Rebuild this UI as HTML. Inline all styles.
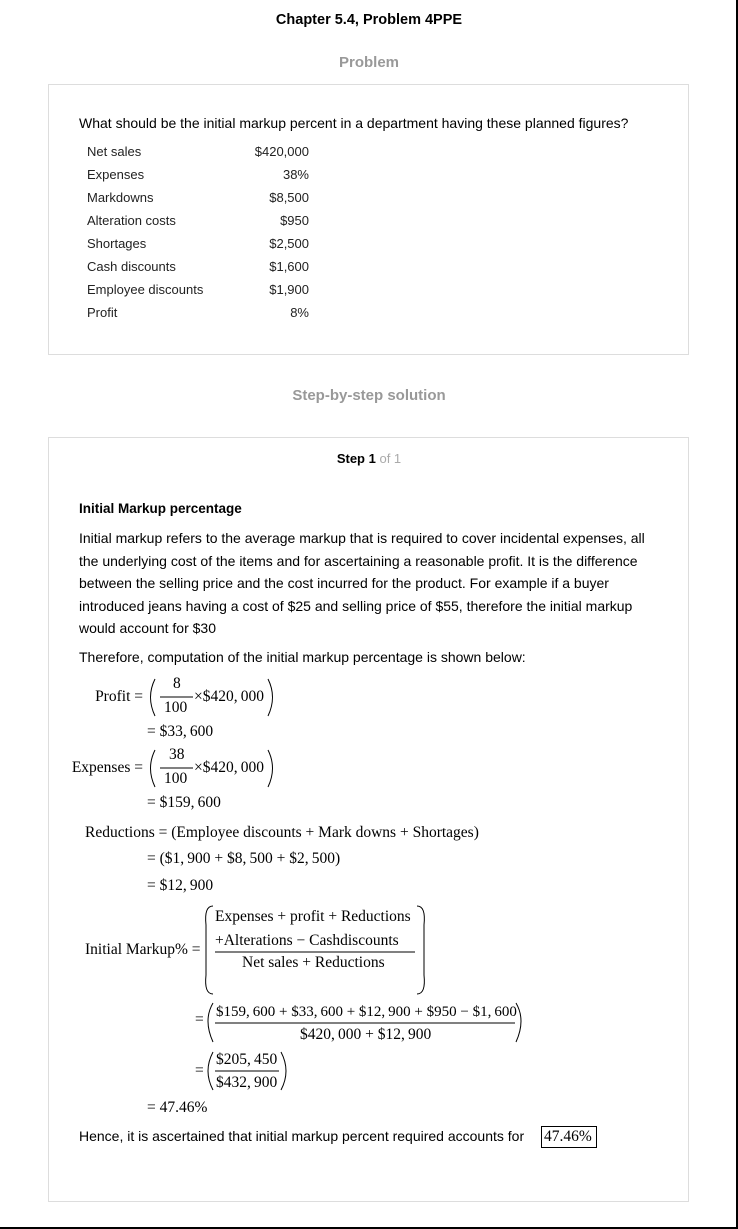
<!DOCTYPE html>
<html><head><meta charset="utf-8"><style>
body{margin:0;width:738px;height:1229px;position:relative;background:#fff;font-family:"Liberation Sans",sans-serif;color:#000;overflow:hidden}
.a{position:absolute;white-space:nowrap}
.s{font-family:"Liberation Serif",serif;font-size:15.5px;line-height:18px}
.box{position:absolute;border:1px solid #ddd}
.t{font-size:13px;color:#222;line-height:16px}
.r{text-align:right;width:100px}
.lab{text-align:right;width:120px;left:23px}
</style></head><body>
<div style="position:absolute;right:0;top:0;width:2px;height:1229px;background:#000"></div>
<div style="position:absolute;left:0;bottom:0;width:738px;height:2px;background:#000"></div>

<div class="a" style="left:0;width:738px;text-align:center;top:12px;font-weight:bold;font-size:14.5px">Chapter 5.4, Problem 4PPE</div>
<div class="a" style="left:0;width:738px;text-align:center;top:54px;font-weight:bold;font-size:15px;color:#999">Problem</div>
<div class="box" style="left:48px;top:84px;width:639px;height:269px"></div>
<div class="a" style="left:79px;top:115px;font-size:14px">What should be the initial markup percent in a department having these planned figures?</div>
<div class="a t" style="left:87px;top:144px">Net sales</div><div class="a t r" style="left:209px;top:144px">$420,000</div>
<div class="a t" style="left:87px;top:167px">Expenses</div><div class="a t r" style="left:209px;top:167px">38%</div>
<div class="a t" style="left:87px;top:190px">Markdowns</div><div class="a t r" style="left:209px;top:190px">$8,500</div>
<div class="a t" style="left:87px;top:213px">Alteration costs</div><div class="a t r" style="left:209px;top:213px">$950</div>
<div class="a t" style="left:87px;top:236px">Shortages</div><div class="a t r" style="left:209px;top:236px">$2,500</div>
<div class="a t" style="left:87px;top:259px">Cash discounts</div><div class="a t r" style="left:209px;top:259px">$1,600</div>
<div class="a t" style="left:87px;top:282px">Employee discounts</div><div class="a t r" style="left:209px;top:282px">$1,900</div>
<div class="a t" style="left:87px;top:305px">Profit</div><div class="a t r" style="left:209px;top:305px">8%</div>

<div class="a" style="left:0;width:738px;text-align:center;top:387px;font-weight:bold;font-size:15px;color:#999">Step-by-step solution</div>
<div class="box" style="left:48px;top:437px;width:639px;height:763px"></div>
<div class="a" style="left:0;width:738px;text-align:center;top:451px;font-size:13px"><b>Step 1</b> <span style="color:#aaa">of 1</span></div>
<div class="a" style="left:79px;top:501px;font-size:13.5px;font-weight:bold">Initial Markup percentage</div>
<div class="a" style="left:79px;top:527px;font-size:14px;line-height:22.5px">Initial markup refers to the average markup that is required to cover incidental expenses, all<br>the underlying cost of the items and for ascertaining a reasonable profit. It is the difference<br>between the selling price and the cost incurred for the product. For example if a buyer<br>introduced jeans having a cost of $25 and selling price of $55, therefore the initial markup<br>would account for $30</div>
<div class="a" style="left:79px;top:649px;font-size:14px">Therefore, computation of the initial markup percentage is shown below:</div>

<svg class="a" style="left:0;top:0" width="738" height="1229" fill="none" stroke="#000" stroke-width="1">
<path d="M155 679 Q146 697 155 716"/><path d="M268 679 Q277 697 268 716"/>
<line x1="160" y1="697" x2="193" y2="697"/>
<path d="M155 750 Q146 768 155 787"/><path d="M268 750 Q277 768 268 787"/>
<line x1="160" y1="768" x2="193" y2="768"/>
<path d="M213 906 Q204 906 206 925 L206 975 Q204 994 213 994"/>
<path d="M417 906 Q426 906 424 925 L424 975 Q426 994 417 994"/>
<line x1="215" y1="952" x2="415" y2="952"/>
<path d="M213 1003 Q203 1020 213 1042"/><path d="M516 1003 Q526 1020 516 1042"/>
<line x1="215" y1="1023" x2="515" y2="1023"/>
<path d="M213 1052 Q203 1071 213 1090"/><path d="M281 1052 Q291 1071 281 1090"/>
<line x1="215" y1="1071" x2="279" y2="1071"/>
<rect x="541.5" y="1126.5" width="55" height="21"/>
</svg>

<div class="a s lab" style="top:688px">Profit =</div>
<div class="a s" style="left:173px;top:675px">8</div>
<div class="a s" style="left:164px;top:699px">100</div>
<div class="a s" style="left:194px;top:688px">×$420,&thinsp;000</div>
<div class="a s" style="left:147px;top:723px">= $33,&thinsp;600</div>
<div class="a s lab" style="top:759px">Expenses =</div>
<div class="a s" style="left:169px;top:746px">38</div>
<div class="a s" style="left:164px;top:770px">100</div>
<div class="a s" style="left:194px;top:759px">×$420,&thinsp;000</div>
<div class="a s" style="left:147px;top:794px">= $159,&thinsp;600</div>
<div class="a s" style="left:85px;top:824px">Reductions = (Employee discounts + Mark downs + Shortages)</div>
<div class="a s" style="left:147px;top:850px">= ($1,&thinsp;900 + $8,&thinsp;500 + $2,&thinsp;500)</div>
<div class="a s" style="left:147px;top:877px">= $12,&thinsp;900</div>
<div class="a s" style="left:85px;top:941px">Initial Markup% =</div>
<div class="a s" style="left:215px;top:908px">Expenses + profit + Reductions</div>
<div class="a s" style="left:215px;top:932px">+Alterations − Cashdiscounts</div>
<div class="a s" style="left:242px;top:954px">Net sales + Reductions</div>
<div class="a s" style="left:195px;top:1011px">=</div>
<div class="a s" style="left:216px;top:1003px;font-size:15px">$159,&thinsp;600 + $33,&thinsp;600 + $12,&thinsp;900 + $950 − $1,&thinsp;600</div>
<div class="a s" style="left:300px;top:1026px">$420,&thinsp;000 + $12,&thinsp;900</div>
<div class="a s" style="left:195px;top:1062px">=</div>
<div class="a s" style="left:216px;top:1051px">$205,&thinsp;450</div>
<div class="a s" style="left:216px;top:1074px">$432,&thinsp;900</div>
<div class="a s" style="left:147px;top:1099px">= 47.46%</div>
<div class="a" style="left:79px;top:1128px;font-size:14px">Hence, it is ascertained that initial markup percent required accounts for</div>
<div class="a s" style="left:544px;top:1128px">47.46%</div>
</body></html>
